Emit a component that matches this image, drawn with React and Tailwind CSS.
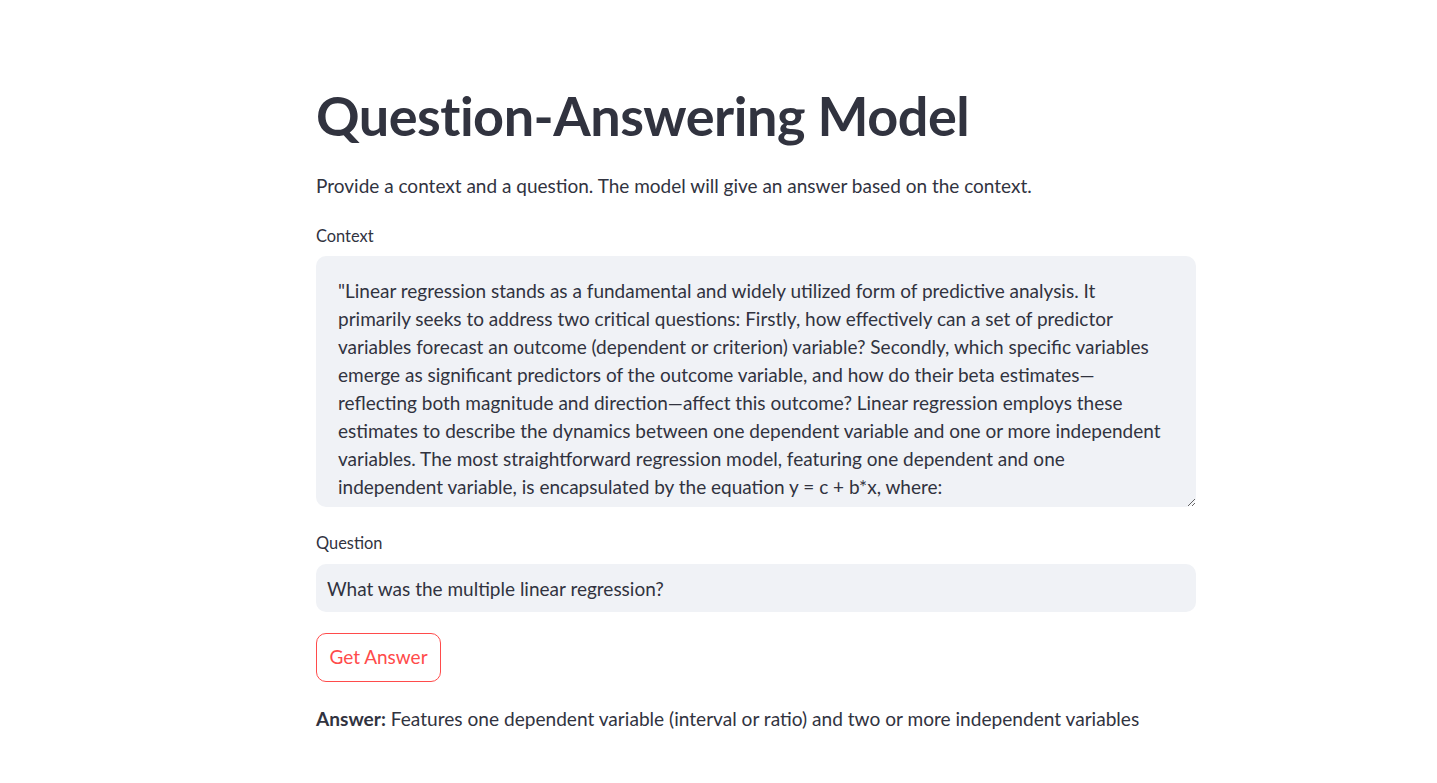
import React from 'react';

const contextText = [
    '"Linear regression stands as a fundamental and widely utilized form of predictive analysis. It',
    'primarily seeks to address two critical questions: Firstly, how effectively can a set of predictor',
    'variables forecast an outcome (dependent or criterion) variable? Secondly, which specific variables',
    'emerge as significant predictors of the outcome variable, and how do their beta estimates—',
    'reflecting both magnitude and direction—affect this outcome? Linear regression employs these',
    'estimates to describe the dynamics between one dependent variable and one or more independent',
    'variables. The most straightforward regression model, featuring one dependent and one',
    'independent variable, is encapsulated by the equation y = c + b*x, where:',
    'y = estimated dependent variable score, c = constant, b = regression coefficient, and x = score',
    'on the independent variable."',
].join('\n');

const App = () => {
    return (
        <div className="min-h-screen bg-white text-[#31333F] font-['Lato',sans-serif]">
            <div className="ml-[316px] w-[880px] pt-[88px] flex flex-col">
                {/* Title */}
                <h1 className="h-[56px] flex items-center text-[54px] font-bold tracking-[-0.5px] leading-none">
                    Question-Answering Model
                </h1>
                <p className="mt-[28px] h-[28px] flex items-center text-[19px]">
                    Provide a context and a question. The model will give an answer based on the context.
                </p>

                {/* Context */}
                <label className="mt-[24px] h-[24px] flex items-center text-[16.4px]">Context</label>
                <textarea
                    readOnly
                    wrap="off"
                    value={contextText}
                    className="mt-[8px] h-[251px] w-full resize-y overflow-hidden bg-[#F0F2F6] rounded-[10px] pl-[22px] pr-[20px] py-[21px] text-[19px] leading-[28px] text-[#31333F] outline-none"
                />

                {/* Question */}
                <label className="mt-[24px] h-[24px] flex items-center text-[16.4px]">Question</label>
                <input
                    readOnly
                    value="What was the multiple linear regression?"
                    className="mt-[9px] h-[48px] w-full bg-[#F0F2F6] rounded-[10px] px-[11px] text-[19px] text-[#31333F] outline-none"
                />

                {/* Button */}
                <div className="mt-[21px]">
                    <button className="h-[49px] w-[125px] flex items-center justify-center border border-[#FF4B4B] rounded-[10px] text-[19px] text-[#FF4B4B] bg-white">
                        Get Answer
                    </button>
                </div>

                {/* Answer */}
                <p className="mt-[23px] h-[28px] flex items-center text-[19.1px] whitespace-nowrap">
                    <span className="font-bold mr-[5px]">Answer:</span>
                    Features one dependent variable (interval or ratio) and two or more independent variables
                </p>
            </div>
        </div>
    );
};

export default App;
